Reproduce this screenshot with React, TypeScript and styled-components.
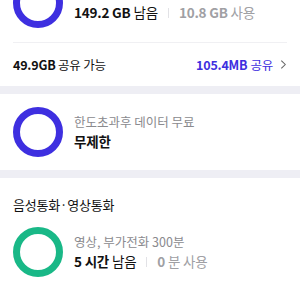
import styled, { createGlobalStyle } from 'styled-components';

const GlobalStyle = createGlobalStyle`
  body {
    margin: 0;
    background: #ffffff;
    font-family: 'Noto Sans CJK KR', 'Noto Sans', sans-serif;
    color: #111111;
  }
`;

type Usage = {
  label?: string;
  value: string;
  valueUnit: string;
  used?: string;
  usedUnit?: string;
  color: string;
};

const Ring = ({ color }: { color: string }) => (
  <RingSvg width="50" height="50" viewBox="0 0 50 50">
    <circle cx="25" cy="25" r="21.5" fill="none" stroke={color} strokeWidth="7" />
  </RingSvg>
);

const UsageRow = ({ usage }: { usage: Usage }) => (
  <Row>
    <Ring color={usage.color} />
    <Info $noLabel={!usage.label}>
      {usage.label && <Label>{usage.label}</Label>}
      <Values>
        <Value>
          <b>{usage.value}</b> {usage.valueUnit}
        </Value>
        {usage.used && (
          <>
            <Bar />
            <Used>
              <b>{usage.used}</b> {usage.usedUnit}
            </Used>
          </>
        )}
      </Values>
    </Info>
  </Row>
);

const App = () => {
  return (
    <Page>
      <GlobalStyle />
      <Card>
        <TopRow>
          <UsageRow
            usage={{
              value: '149.2 GB',
              valueUnit: '남음',
              used: '10.8 GB',
              usedUnit: '사용',
              color: '#3e2fe0',
            }}
          />
        </TopRow>
        <Divider />
        <ShareRow>
          <span>
            <b>49.9GB</b> 공유 가능
          </span>
          <ShareLink>
            <b>105.4MB</b> 공유
            <Chevron viewBox="0 0 8 12" width="7" height="11">
              <path d="M1.5 1.5 L6 6 L1.5 10.5" fill="none" stroke="#666" strokeWidth="1.2" />
            </Chevron>
          </ShareLink>
        </ShareRow>
      </Card>
      <Gap />
      <Card>
        <Block>
          <UsageRow
            usage={{
              label: '한도초과후 데이터 무료',
              value: '무제한',
              valueUnit: '',
              color: '#3e2fe0',
            }}
          />
        </Block>
      </Card>
      <Gap />
      <Card>
        <SectionTitle>음성통화·영상통화</SectionTitle>
        <Block>
          <UsageRow
            usage={{
              label: '영상, 부가전화 300분',
              value: '5 시간',
              valueUnit: '남음',
              used: '0',
              usedUnit: '분 사용',
              color: '#19b887',
            }}
          />
        </Block>
      </Card>
    </Page>
  );
};

const Page = styled.div`
  width: 300px;
  height: 300px;
  overflow: hidden;
  background: #ffffff;
`;

const Card = styled.div`
  background: #ffffff;
  padding: 0 13px;
`;

const TopRow = styled.div`
  margin-top: -22px;
  padding-bottom: 14px;
`;

const Block = styled.div`
  padding: 13px 0;
`;

const Row = styled.div`
  display: flex;
  align-items: center;
  gap: 11px;
`;

const RingSvg = styled.svg`
  flex: none;
  display: block;
`;

const Info = styled.div<{ $noLabel?: boolean }>`
  display: flex;
  flex-direction: column;
  gap: 1px;
  padding-top: ${({ $noLabel }) => ($noLabel ? '19px' : '0')};
`;

const Label = styled.div`
  font-size: 12.5px;
  line-height: 18px;
  color: #8a8a8e;
`;

const Values = styled.div`
  display: flex;
  align-items: center;
  gap: 10px;
`;

const Value = styled.div`
  font-size: 13.5px;
  line-height: 19px;
  color: #111111;
  letter-spacing: -0.2px;

  b {
    font-weight: 700;
  }
`;

const Bar = styled.div`
  width: 1px;
  height: 10px;
  background: #e2e2e6;
`;

const Used = styled(Value)`
  color: #a0a0a4;
`;

const Divider = styled.div`
  height: 1px;
  background: #f0f0f3;
`;

const ShareRow = styled.div`
  height: 43px;
  display: flex;
  align-items: center;
  justify-content: space-between;
  font-size: 12.5px;
  letter-spacing: -0.2px;
  color: #111111;

  b {
    font-weight: 700;
  }
`;

const ShareLink = styled.span`
  display: flex;
  align-items: center;
  gap: 3px;
  color: #3e2fe0;
`;

const Chevron = styled.svg`
  margin-left: 4px;
`;

const Gap = styled.div`
  height: 8px;
  background: #eeeef4;
`;

const SectionTitle = styled.div`
  padding: 18px 0 0;
  font-size: 13px;
  line-height: 18px;
  letter-spacing: -0.2px;
  color: #111111;
`;

export default App;
